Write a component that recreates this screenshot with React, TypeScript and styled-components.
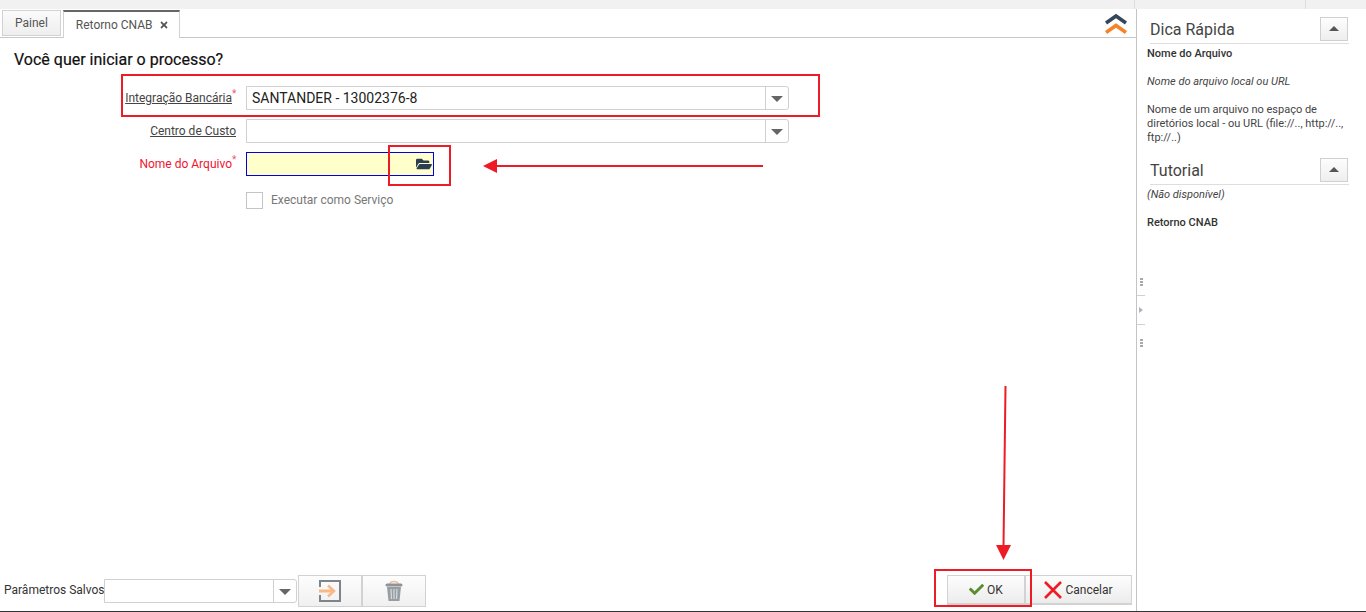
import React from "react";
import styled, { createGlobalStyle } from "styled-components";
import { FaCheck, FaFolderOpen, FaTimes } from "react-icons/fa";

const GlobalStyle = createGlobalStyle`
  html, body {
    margin: 0;
    padding: 0;
    background: #fff;
    overflow: hidden;
  }
  * {
    box-sizing: border-box;
  }
`;

const Page = styled.div`
  position: relative;
  display: flex;
  flex-direction: column;
  width: 1366px;
  height: 612px;
  font-family: Roboto, "Liberation Sans", sans-serif;
  font-size: 12px;
  color: #333;
  border-bottom: 1px solid #333;
`;

const TopBar = styled.div`
  display: flex;
  justify-content: flex-end;
  height: 9px;
  background: #f1f1f1;
`;

const TopCell = styled.div<{ $width: number }>`
  width: ${(p) => p.$width}px;
  border-left: 1px solid #dcdcdc;
`;

const Body = styled.div`
  display: flex;
  flex: 1;
  min-height: 0;
`;

const Main = styled.div`
  display: flex;
  flex-direction: column;
  width: 1136px;
`;

const TabBar = styled.div`
  display: flex;
  align-items: flex-start;
  gap: 2px;
  height: 29px;
  padding: 1px 0 0 2px;
  border-bottom: 1px solid #c8c8c8;
  position: relative;
`;

const Tab = styled.div<{ $active?: boolean }>`
  display: flex;
  align-items: center;
  gap: 6px;
  height: ${(p) => (p.$active ? 28 : 26)}px;
  padding: ${(p) => (p.$active ? "0 10px 0 12px" : "0 12px")};
  color: #555;
  font-size: 12px;
  background: ${(p) =>
    p.$active ? "#fff" : "linear-gradient(#fbfbfb, #eeeeee)"};
  border: 1px solid #d2d2d2;
  border-top: ${(p) => (p.$active ? "2px solid #666" : "1px solid #d2d2d2")};
  border-bottom: ${(p) => (p.$active ? "none" : "1px solid #d2d2d2")};
  svg {
    width: 10px;
    height: 10px;
    color: #555;
  }
`;

const CollapseIcon = styled.svg`
  position: absolute;
  right: 9px;
  top: 3px;
  width: 22px;
  height: 22px;
`;

const Content = styled.div`
  flex: 1;
  display: flex;
  flex-direction: column;
  padding: 0 4px 0 14px;
  min-height: 0;
`;

const Title = styled.h1`
  margin: 12px 0 0;
  font-size: 16px;
  line-height: 19px;
  font-weight: 400;
  color: #111;
  -webkit-text-stroke: 0.2px #111;
`;

const Form = styled.div`
  display: grid;
  grid-template-columns: 222px 543px;
  grid-auto-rows: 24px;
  column-gap: 10px;
  row-gap: 9px;
  margin-top: 17px;
`;

const Label = styled.div<{ $required?: boolean; $link?: boolean }>`
  display: flex;
  justify-content: flex-end;
  align-items: center;
  font-size: 12px;
  color: ${(p) => (p.$required && !p.$link ? "#f0142f" : "#444")};
  span {
    text-decoration: ${(p) => (p.$link ? "underline" : "none")};
  }
`;

const Star = styled.sup`
  align-self: flex-start;
  margin: 3px 0 0 0;
  width: 4px;
  font-size: 10px;
  line-height: 10px;
  color: #f4566a;
`;

const Select = styled.div`
  display: flex;
  height: 24px;
  background: #fff;
  border: 1px solid #d0d0d0;
  border-radius: 0 3px 3px 0;
`;

const SelectValue = styled.div`
  flex: 1;
  padding-left: 5px;
  font-size: 14px;
  line-height: 22px;
  color: #222;
`;

const SelectArrow = styled.div`
  display: flex;
  align-items: center;
  justify-content: center;
  width: 23px;
  border-left: 1px solid #d0d0d0;
  &::after {
    content: "";
    border-left: 6px solid transparent;
    border-right: 6px solid transparent;
    border-top: 6px solid #666;
    margin-top: 1px;
  }
`;

const FileField = styled.div`
  display: flex;
  justify-content: flex-end;
  align-items: center;
  width: 188px;
  height: 24px;
  padding-right: 1px;
  background: #ffffcc;
  border: 1px solid #0000e6;
  svg {
    width: 16px;
    height: 16px;
    color: #2c3e50;
  }
`;

const CheckRow = styled.div`
  display: flex;
  align-items: center;
  gap: 8px;
  margin: 15px 0 0 232px;
  height: 17px;
  color: #777;
  font-size: 12px;
`;

const CheckBox = styled.div`
  width: 17px;
  height: 17px;
  margin-top: 1px;
  background: #fff;
  border: 1px solid #c4c4c4;
`;

const Footer = styled.div`
  display: flex;
  align-items: flex-start;
  height: 36px;
  padding: 0 4px;
`;

const SavedLabel = styled.div`
  width: 100px;
  margin-top: 4px;
  line-height: 22px;
  font-size: 12px;
  white-space: nowrap;
  color: #333;
`;

const SavedSelect = styled(Select)`
  width: 193px;
  margin-top: 4px;
`;

const SavedGroup = styled.div`
  display: flex;
  margin-left: 1px;
`;

const IconButton = styled.button`
  display: flex;
  align-items: center;
  justify-content: center;
  width: 64px;
  height: 32px;
  padding: 0;
  background: linear-gradient(#fdfdfd, #f0f0f0);
  border: 1px solid #d2d2d2;
`;

const Actions = styled.div`
  display: flex;
  margin-left: auto;
`;

const ActionButton = styled.button<{ $width: number }>`
  display: flex;
  align-items: center;
  justify-content: center;
  gap: 3px;
  width: ${(p) => p.$width}px;
  height: 30px;
  padding: 0;
  font-family: inherit;
  font-size: 12px;
  color: #333;
  background: linear-gradient(#fdfdfd, #ececec);
  border: 1px solid #d2d2d2;
  border-bottom-width: 2px;
  svg {
    flex: none;
  }
`;

const Splitter = styled.div`
  display: flex;
  flex-direction: column;
  align-items: center;
  justify-content: center;
  width: 9px;
  border-left: 1px solid #c4c4c4;
`;

const Dots = styled.div<{ $after?: boolean }>`
  display: flex;
  flex-direction: column;
  gap: 1px;
  height: 36px;
  justify-content: ${(p) => (p.$after ? "flex-start" : "flex-end")};
  padding: ${(p) => (p.$after ? "14px 0 0" : "0 0 9px")};
  span {
    width: 3px;
    height: 2px;
    background: #a9a9a9;
  }
`;

const SplitHandle = styled.div`
  display: flex;
  align-items: center;
  justify-content: center;
  width: 100%;
  height: 30px;
  border-top: 1px solid #d0d0d0;
  border-bottom: 1px solid #d0d0d0;
  &::after {
    content: "";
    border-top: 3px solid transparent;
    border-bottom: 3px solid transparent;
    border-left: 4px solid #aab4c0;
  }
`;

const Sidebar = styled.aside`
  flex: 1;
  padding: 7px 17px 0 2px;
  font-size: 11px;
  line-height: 14px;
  color: #333;
`;

const PanelHeader = styled.div<{ $top?: number }>`
  display: flex;
  align-items: center;
  justify-content: space-between;
  height: 28px;
  margin: ${(p) => p.$top ?? 0}px 0 0 3px;
  padding-right: 1px;
  border-bottom: 1px solid #dedede;
`;

const PanelTitle = styled.h2`
  margin: 0;
  font-size: 16px;
  font-weight: 400;
  color: #444;
`;

const PanelToggle = styled.button`
  display: flex;
  align-items: center;
  justify-content: center;
  width: 28px;
  height: 24px;
  padding: 0;
  background: linear-gradient(#fdfdfd, #eeeeee);
  border: 1px solid #d0d0d0;
  margin-bottom: 2px;
  &::after {
    content: "";
    border-left: 5px solid transparent;
    border-right: 5px solid transparent;
    border-bottom: 5px solid #555;
  }
`;

const HelpText = styled.p<{ $strong?: boolean; $italic?: boolean; $top?: number }>`
  margin: ${(p) => p.$top ?? 0}px 0 0;
  font-weight: ${(p) => (p.$strong ? 500 : 400)};
  font-style: ${(p) => (p.$italic ? "italic" : "normal")};
  color: ${(p) => (p.$strong ? "#333" : "#444")};
`;

const Overlay = styled.svg`
  position: absolute;
  left: 0;
  top: 0;
  width: 1366px;
  height: 612px;
  pointer-events: none;
`;

const CollapseChevrons = () => (
  <CollapseIcon viewBox="0 0 22 22" fill="none" strokeWidth="3.6">
    <path d="M1 11 L11 4 L21 11" stroke="#34465a" />
    <path d="M1 20.5 L11 13.5 L21 20.5" stroke="#f5832a" />
  </CollapseIcon>
);

const ImportIcon = () => (
  <svg width="24" height="24" viewBox="0 0 24 24" fill="none">
    <path d="M2 8 V2 H22 V22 H2 V16" stroke="#7a858c" strokeWidth="2" />
    <path d="M1 12 H14" stroke="#f9b888" strokeWidth="3" />
    <path d="M10 6.5 L16 12 L10 17.5" stroke="#f9b888" strokeWidth="2.5" />
  </svg>
);

const TrashIcon = () => (
  <svg width="18" height="22" viewBox="0 0 18 22">
    <path d="M5 4 C5 0.5 13 0.5 13 4" fill="none" stroke="#f3bd95" strokeWidth="1.5" />
    <rect x="0.5" y="3.5" width="17" height="3" rx="1.5" fill="#8d9499" />
    <path d="M2 7 H16 L14.5 21 H3.5 Z" fill="#979ea3" />
    <path d="M6 9 L6.5 19 M9 9 V19 M12 9 L11.5 19" stroke="#d8dbdd" strokeWidth="1.2" />
  </svg>
);

const CancelIcon = () => (
  <svg width="18" height="18" viewBox="0 0 18 18">
    <path d="M1 1 L17 17 M17 1 L1 17" stroke="#ee1c25" strokeWidth="2.6" />
  </svg>
);

const Annotations = () => (
  <Overlay viewBox="0 0 1366 612" fill="none" stroke="#ed1c24">
    <rect x="122" y="75" width="697" height="41" strokeWidth="2" />
    <rect x="389" y="146" width="61" height="39" strokeWidth="2" />
    <rect x="935" y="570" width="96" height="36" strokeWidth="2" />
    <path d="M763 166 H495" strokeWidth="2" />
    <path d="M483 166 L497 159 V173 Z" fill="#ed1c24" stroke="none" />
    <path d="M1005.5 386 L1003.5 547" strokeWidth="2" />
    <path d="M996 545 H1011 L1003.5 560 Z" fill="#ed1c24" stroke="none" />
  </Overlay>
);

export default function App() {
  return (
    <Page>
      <GlobalStyle />
      <TopBar>
        <TopCell $width={171} />
        <TopCell $width={61} />
      </TopBar>
      <Body>
        <Main>
          <TabBar>
            <Tab>Painel</Tab>
            <Tab $active>
              Retorno CNAB
              <FaTimes />
            </Tab>
            <CollapseChevrons />
          </TabBar>
          <Content>
            <Title>Você quer iniciar o processo?</Title>
            <Form>
              <Label $required $link>
                <span>Integração Bancária</span>
                <Star>*</Star>
              </Label>
              <Select>
                <SelectValue>SANTANDER - 13002376-8</SelectValue>
                <SelectArrow />
              </Select>
              <Label $link>
                <span>Centro de Custo</span>
              </Label>
              <Select>
                <SelectValue />
                <SelectArrow />
              </Select>
              <Label $required>
                <span>Nome do Arquivo</span>
                <Star>*</Star>
              </Label>
              <FileField>
                <FaFolderOpen />
              </FileField>
            </Form>
            <CheckRow>
              <CheckBox />
              Executar como Serviço
            </CheckRow>
          </Content>
          <Footer>
            <SavedLabel>Parâmetros Salvos</SavedLabel>
            <SavedSelect>
              <SelectValue />
              <SelectArrow />
            </SavedSelect>
            <SavedGroup>
              <IconButton>
                <ImportIcon />
              </IconButton>
              <IconButton>
                <TrashIcon />
              </IconButton>
            </SavedGroup>
            <Actions>
              <ActionButton $width={78}>
                <FaCheck size={15} color="#5b8c2f" />
                OK
              </ActionButton>
              <ActionButton $width={107}>
                <CancelIcon />
                Cancelar
              </ActionButton>
            </Actions>
          </Footer>
        </Main>
        <Splitter>
          <Dots>
            <span />
            <span />
            <span />
          </Dots>
          <SplitHandle />
          <Dots $after>
            <span />
            <span />
            <span />
          </Dots>
        </Splitter>
        <Sidebar>
          <PanelHeader>
            <PanelTitle>Dica Rápida</PanelTitle>
            <PanelToggle />
          </PanelHeader>
          <HelpText $strong $top={3}>Nome do Arquivo</HelpText>
          <HelpText $italic $top={14}>Nome do arquivo local ou URL</HelpText>
          <HelpText $top={14}>
            Nome de um arquivo no espaço de diretórios local - ou URL (file://.., http://.., ftp://..)
          </HelpText>
          <PanelHeader $top={12}>
            <PanelTitle>Tutorial</PanelTitle>
            <PanelToggle />
          </PanelHeader>
          <HelpText $italic $top={3}>(Não disponível)</HelpText>
          <HelpText $strong $top={14}>Retorno CNAB</HelpText>
        </Sidebar>
      </Body>
      <Annotations />
    </Page>
  );
}
